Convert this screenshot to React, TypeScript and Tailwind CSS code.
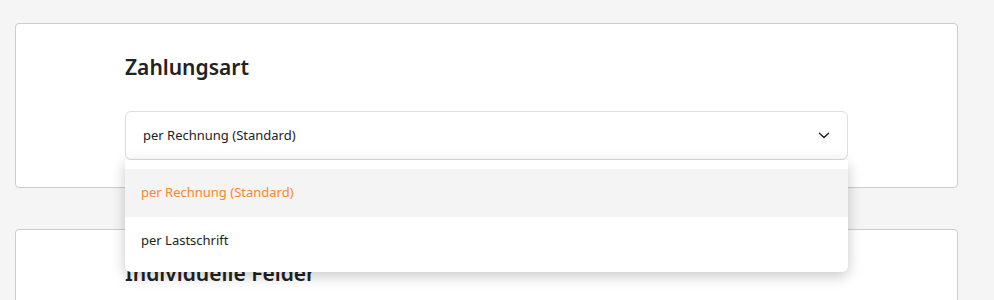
import { useState } from "react";

const OPTIONS = ["per Rechnung (Standard)", "per Lastschrift"];

function Chevron() {
  return (
    <svg width="12" height="7" viewBox="0 0 12 7" fill="none" className="text-[#222]">
      <path d="M1.5 1.2l4.5 4.3 4.5-4.3" stroke="currentColor" strokeWidth="1.4" strokeLinecap="round" strokeLinejoin="round" />
    </svg>
  );
}

export default function App() {
  const [selected] = useState(OPTIONS[0]);

  return (
    <div
      className="h-screen overflow-hidden bg-[#f5f5f5] pl-[15px] pr-[36px] pt-[23px] text-[#222]"
      style={{ fontFamily: '"Noto Sans", "Open Sans", sans-serif' }}
    >
      <section className="h-[165px] rounded-[4px] border border-[#cccccc] bg-white px-[109px] pt-[29px]">
        <h2 className="text-[21px] font-semibold leading-[28px] text-[#222]">Zahlungsart</h2>

        <div className="relative mt-[30px]">
          <button className="flex h-[49px] w-full items-center justify-between rounded-[6px] border border-[#dcdde8] bg-white pl-[17px] pr-[17px] text-left text-[13px] text-[#222]">
            <span>{selected}</span>
            <Chevron />
          </button>

          <ul className="absolute left-0 right-0 top-full z-10 rounded-b-[6px] bg-white pb-[7px] pt-[9px] shadow-[0_4px_14px_rgba(0,0,0,0.22)]">
            {OPTIONS.map((option) => (
              <li
                key={option}
                className={
                  option === selected
                    ? "flex h-[48px] items-center bg-[#f4f4f4] px-[16px] text-[13px] text-[#f7872f]"
                    : "flex h-[48px] items-center px-[16px] text-[13px] text-[#222]"
                }
              >
                {option}
              </li>
            ))}
          </ul>
        </div>
      </section>

      <section className="mt-[41px] h-[200px] rounded-[4px] border border-[#cccccc] bg-white px-[109px] pt-[29px]">
        <h2 className="text-[21px] font-semibold leading-[28px] text-[#222]">Individuelle Felder</h2>
      </section>
    </div>
  );
}
